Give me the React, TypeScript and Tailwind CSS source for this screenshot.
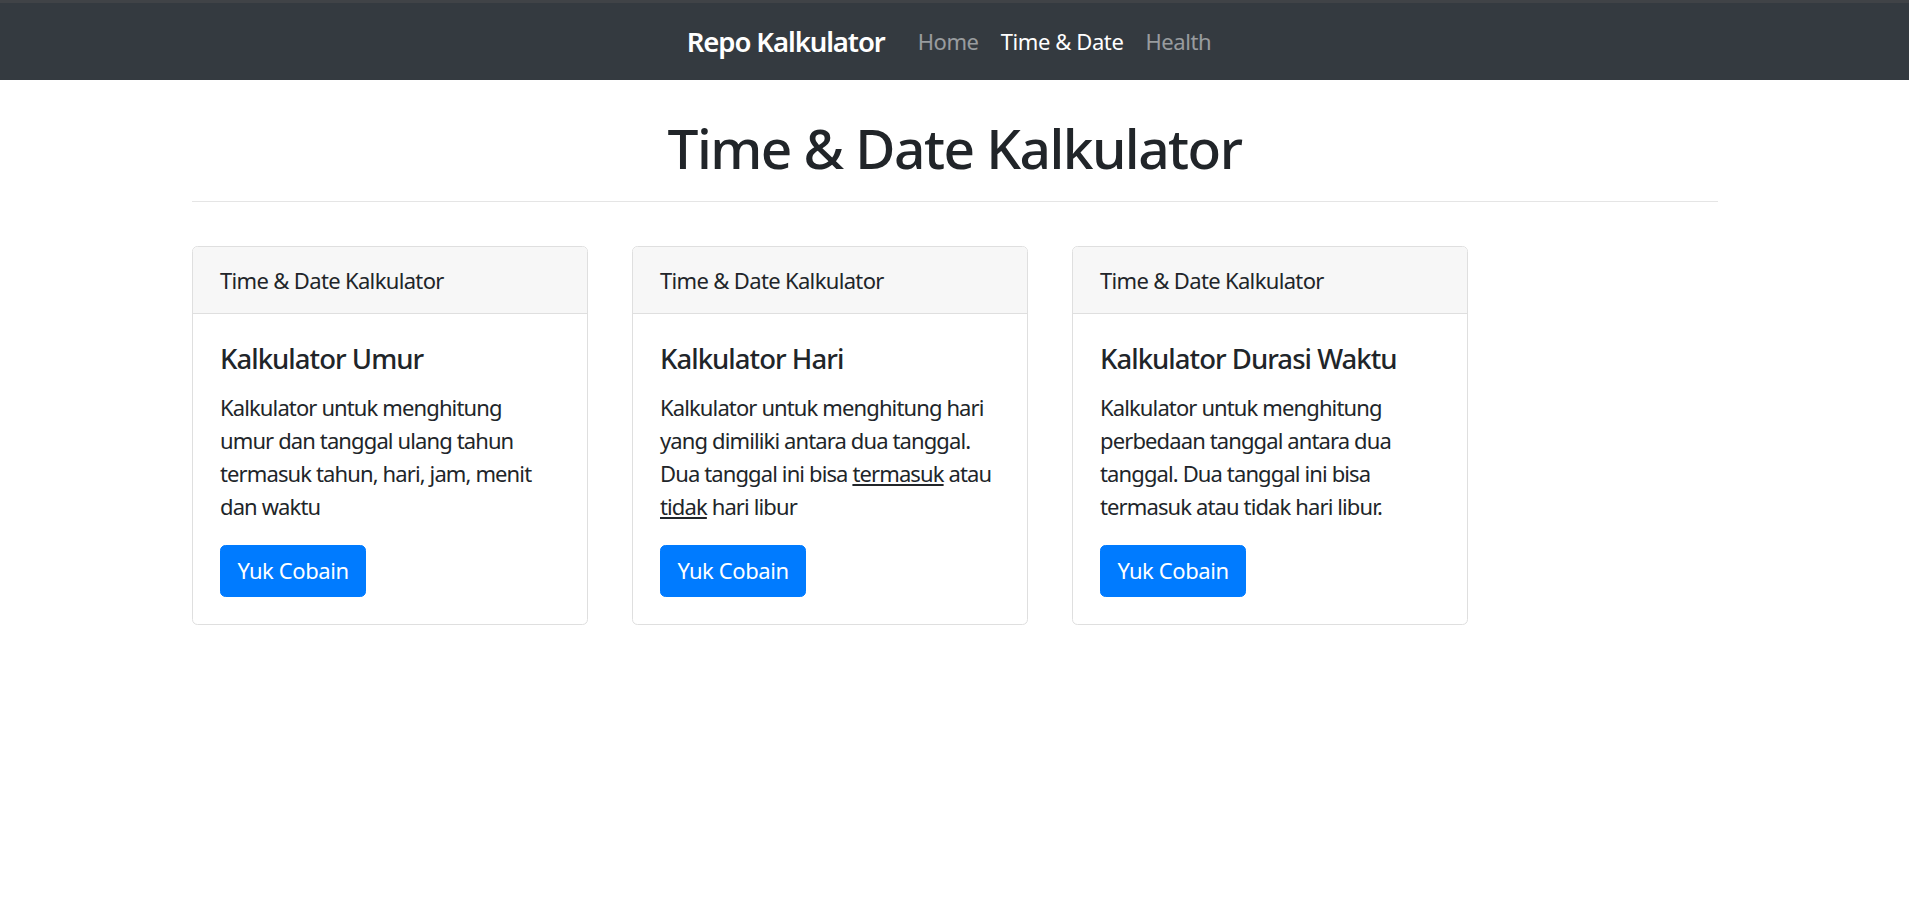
import React from 'react';

const cards = [
  {
    title: 'Kalkulator Umur',
    body: (
      <>Kalkulator untuk menghitung umur dan tanggal ulang tahun termasuk tahun, hari, jam, menit dan waktu</>
    ),
  },
  {
    title: 'Kalkulator Hari',
    body: (
      <>
        Kalkulator untuk menghitung hari yang dimiliki antara dua tanggal. Dua tanggal ini bisa <u>termasuk</u> atau{' '}
        <u>tidak</u> hari libur
      </>
    ),
  },
  {
    title: 'Kalkulator Durasi Waktu',
    body: <>Kalkulator untuk menghitung perbedaan tanggal antara dua tanggal. Dua tanggal ini bisa termasuk atau tidak hari libur.</>,
  },
];

export default function App() {
  return (
    <div className="min-h-screen bg-white text-[#212529] font-['Noto_Sans',sans-serif] tracking-[-0.025em]">
      <nav className="h-[80px] bg-[#343a40] border-t-[3px] border-[#404347] flex justify-center items-center">
        <a className="text-white text-[27.5px] font-semibold tracking-[-0.04em] mr-[22px]">Repo Kalkulator</a>
        <a className="px-[11px] text-[22px] text-white/50">Home</a>
        <a className="px-[11px] text-[22px] text-white">Time &amp; Date</a>
        <a className="px-[11px] text-[22px] text-white/50">Health</a>
      </nav>

      <div className="w-[1526px] mx-auto">
        <h1 className="mt-[35px] text-center text-[55px] leading-[66px] font-medium tracking-[-0.028em]">
          Time &amp; Date Kalkulator
        </h1>
        <hr className="mt-[20px] border-t border-[#e5e5e5]" />

        <div className="mt-[44px] flex gap-[44px]">
          {cards.map((c) => (
            <div key={c.title} className="w-[396px] border border-[#dfdfdf] rounded-[5.5px] overflow-hidden">
              <div className="bg-[#f7f7f7] border-b border-[#dfdfdf] px-[27.5px] py-[16.5px] text-[22px] leading-[33px] tracking-[-0.03em]">
                Time &amp; Date Kalkulator
              </div>
              <div className="p-[27.5px]">
                <h5 className="text-[27.5px] leading-[33px] font-medium tracking-[-0.035em] mb-[16.5px]">{c.title}</h5>
                <p className="text-[22px] leading-[33px] tracking-[-0.04em] mb-[22px]">{c.body}</p>
                <button className="bg-[#007bff] text-white text-[22px] leading-[33px] px-[16.5px] py-[8.25px] rounded-[5.5px] border border-[#007bff]">
                  Yuk Cobain
                </button>
              </div>
            </div>
          ))}
        </div>
      </div>
    </div>
  );
}
